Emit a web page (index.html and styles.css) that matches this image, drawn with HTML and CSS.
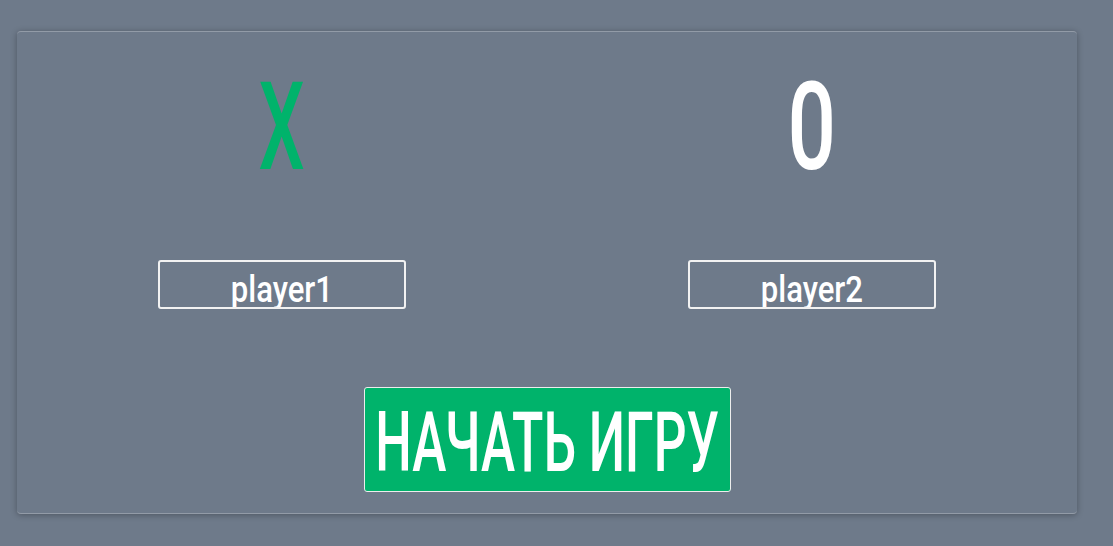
FILE: index.html
```html
<!DOCTYPE html>
<html lang="ru">
<head>
<meta charset="utf-8">
<title>Крестики-нолики</title>
<link rel="stylesheet" href="styles.css">
</head>
<body>
<main class="card">
  <section class="players">
    <div class="player">
      <div class="symbol symbol-x"><span class="squeeze squeeze-x">X</span></div>
      <div class="field"><div class="field-text"><span class="squeeze squeeze-name">player1</span></div></div>
    </div>
    <div class="player">
      <div class="symbol symbol-o"><span class="squeeze squeeze-o">0</span></div>
      <div class="field"><div class="field-text"><span class="squeeze squeeze-name">player2</span></div></div>
    </div>
  </section>
  <div class="actions">
    <button class="start" type="button"><span class="squeeze squeeze-btn">НАЧАТЬ ИГРУ</span></button>
  </div>
</main>
</body>
</html>
```

FILE: styles.css
```css
html, body {
  margin: 0;
  padding: 0;
}
body {
  background: #6e7a8a;
  font-family: Roboto, "Liberation Sans", sans-serif;
  color: #ffffff;
  height: 546px;
  overflow: hidden;
}
.card {
  box-sizing: border-box;
  margin: 31px 36px 0 17px;
  height: 483px;
  padding: 36px 0 22px;
  border-radius: 4px;
  background: #6e7a8a;
  border-top: 1px solid rgba(255, 255, 255, 0.25);
  border-bottom: 1px solid rgba(255, 255, 255, 0.25);
  box-shadow: 0 1px 6px rgba(0, 0, 0, 0.3);
  display: flex;
  flex-direction: column;
}
.players {
  display: grid;
  grid-template-columns: 1fr 1fr;
}
.player {
  display: flex;
  flex-direction: column;
  align-items: center;
  gap: 71px;
}
.squeeze {
  display: inline-block;
  white-space: nowrap;
  transform-origin: center;
}
.symbol {
  height: 122px;
  font-size: 122px;
  line-height: 122px;
  font-weight: 500;
  display: flex;
  justify-content: center;
  margin-top: -1px;
}
.symbol-x { color: #00b36b; }
.symbol-o { color: #ffffff; }
.squeeze-x { transform: scaleX(0.6); }
.squeeze-o { transform: scaleX(0.7); }
.field {
  box-sizing: border-box;
  width: 248px;
  height: 49px;
  border: 2px solid #f2f2f2;
  border-radius: 3px;
  padding-top: 9px;
  overflow: hidden;
}
.field-text {
  display: flex;
  justify-content: center;
  font-size: 37px;
  line-height: 37px;
  font-weight: 500;
}
.squeeze-name { transform: scaleX(0.84); }
.actions {
  margin-top: 78px;
  display: flex;
  justify-content: center;
}
.start {
  box-sizing: border-box;
  width: 367px;
  height: 105px;
  padding: 0;
  background: #00b36b;
  border: 1.5px solid #ededed;
  border-radius: 3px;
  color: #ffffff;
  font-family: Roboto, "Liberation Sans", sans-serif;
  font-size: 83px;
  line-height: 83px;
  font-weight: 500;
  display: flex;
  justify-content: center;
  align-items: center;
  overflow: visible;
}
.squeeze-btn {
  transform: translateY(3px) scaleX(0.62);
}
```
